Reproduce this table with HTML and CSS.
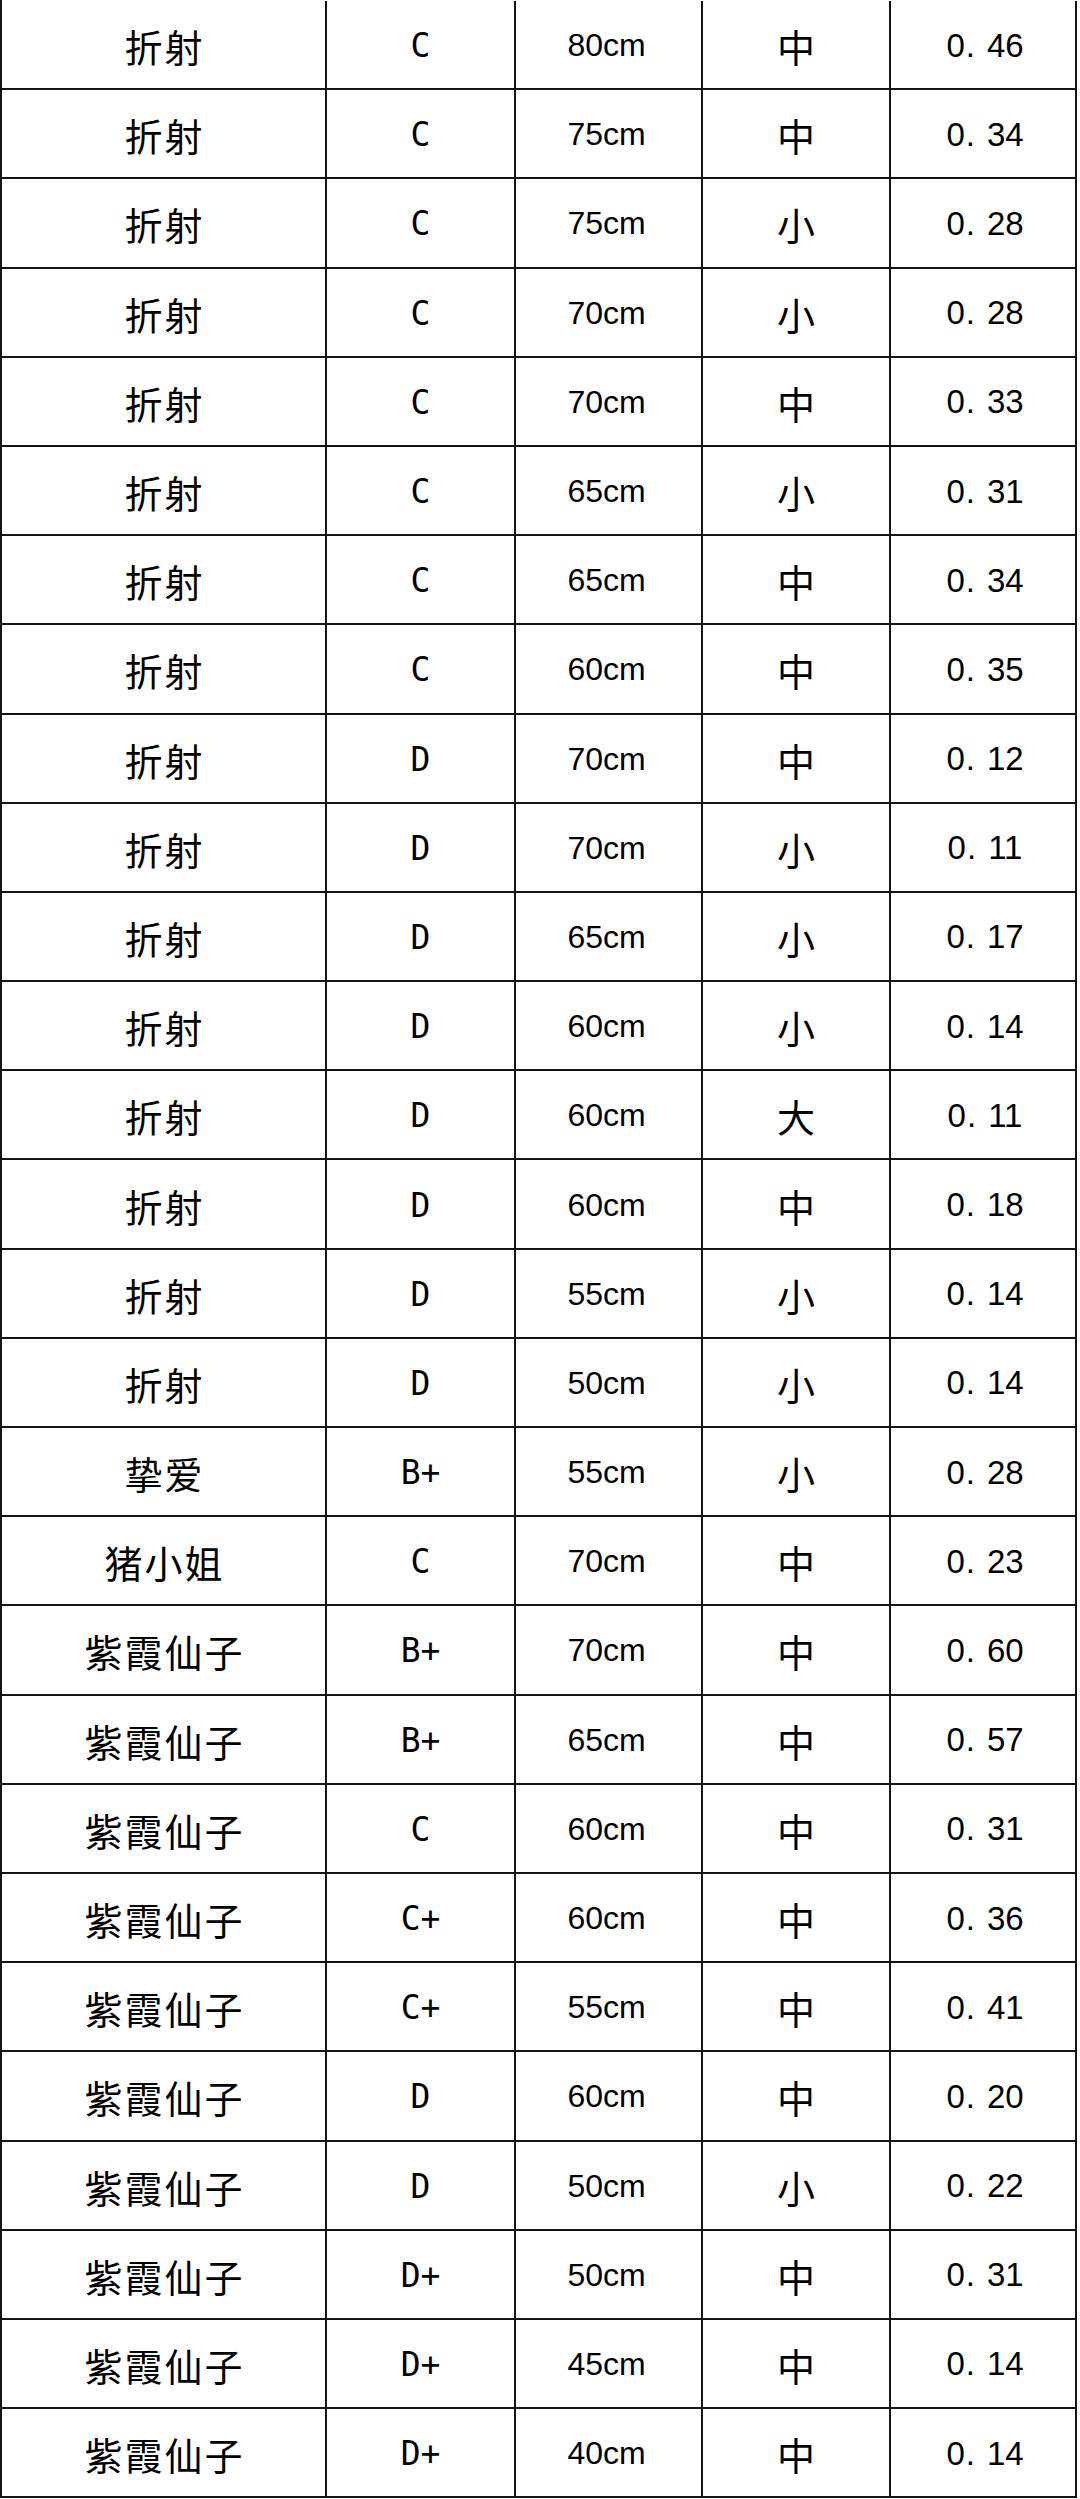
FILE: index.html
```html
<!DOCTYPE html>
<html lang="zh-CN">
<head>
<meta charset="utf-8">
<link rel="stylesheet" href="styles.css">
</head>
<body>
<div class="sheet">
  <div class="row"><div class="c name">折射</div><div class="c cup">C</div><div class="c len">80cm</div><div class="c size">中</div><div class="c val">0<span class="dot">.</span>46</div></div>
  <div class="row"><div class="c name">折射</div><div class="c cup">C</div><div class="c len">75cm</div><div class="c size">中</div><div class="c val">0<span class="dot">.</span>34</div></div>
  <div class="row"><div class="c name">折射</div><div class="c cup">C</div><div class="c len">75cm</div><div class="c size">小</div><div class="c val">0<span class="dot">.</span>28</div></div>
  <div class="row"><div class="c name">折射</div><div class="c cup">C</div><div class="c len">70cm</div><div class="c size">小</div><div class="c val">0<span class="dot">.</span>28</div></div>
  <div class="row"><div class="c name">折射</div><div class="c cup">C</div><div class="c len">70cm</div><div class="c size">中</div><div class="c val">0<span class="dot">.</span>33</div></div>
  <div class="row"><div class="c name">折射</div><div class="c cup">C</div><div class="c len">65cm</div><div class="c size">小</div><div class="c val">0<span class="dot">.</span>31</div></div>
  <div class="row"><div class="c name">折射</div><div class="c cup">C</div><div class="c len">65cm</div><div class="c size">中</div><div class="c val">0<span class="dot">.</span>34</div></div>
  <div class="row"><div class="c name">折射</div><div class="c cup">C</div><div class="c len">60cm</div><div class="c size">中</div><div class="c val">0<span class="dot">.</span>35</div></div>
  <div class="row"><div class="c name">折射</div><div class="c cup">D</div><div class="c len">70cm</div><div class="c size">中</div><div class="c val">0<span class="dot">.</span>12</div></div>
  <div class="row"><div class="c name">折射</div><div class="c cup">D</div><div class="c len">70cm</div><div class="c size">小</div><div class="c val">0<span class="dot">.</span>11</div></div>
  <div class="row"><div class="c name">折射</div><div class="c cup">D</div><div class="c len">65cm</div><div class="c size">小</div><div class="c val">0<span class="dot">.</span>17</div></div>
  <div class="row"><div class="c name">折射</div><div class="c cup">D</div><div class="c len">60cm</div><div class="c size">小</div><div class="c val">0<span class="dot">.</span>14</div></div>
  <div class="row"><div class="c name">折射</div><div class="c cup">D</div><div class="c len">60cm</div><div class="c size">大</div><div class="c val">0<span class="dot">.</span>11</div></div>
  <div class="row"><div class="c name">折射</div><div class="c cup">D</div><div class="c len">60cm</div><div class="c size">中</div><div class="c val">0<span class="dot">.</span>18</div></div>
  <div class="row"><div class="c name">折射</div><div class="c cup">D</div><div class="c len">55cm</div><div class="c size">小</div><div class="c val">0<span class="dot">.</span>14</div></div>
  <div class="row"><div class="c name">折射</div><div class="c cup">D</div><div class="c len">50cm</div><div class="c size">小</div><div class="c val">0<span class="dot">.</span>14</div></div>
  <div class="row"><div class="c name">挚爱</div><div class="c cup">B+</div><div class="c len">55cm</div><div class="c size">小</div><div class="c val">0<span class="dot">.</span>28</div></div>
  <div class="row"><div class="c name">猪小姐</div><div class="c cup">C</div><div class="c len">70cm</div><div class="c size">中</div><div class="c val">0<span class="dot">.</span>23</div></div>
  <div class="row"><div class="c name">紫霞仙子</div><div class="c cup">B+</div><div class="c len">70cm</div><div class="c size">中</div><div class="c val">0<span class="dot">.</span>60</div></div>
  <div class="row"><div class="c name">紫霞仙子</div><div class="c cup">B+</div><div class="c len">65cm</div><div class="c size">中</div><div class="c val">0<span class="dot">.</span>57</div></div>
  <div class="row"><div class="c name">紫霞仙子</div><div class="c cup">C</div><div class="c len">60cm</div><div class="c size">中</div><div class="c val">0<span class="dot">.</span>31</div></div>
  <div class="row"><div class="c name">紫霞仙子</div><div class="c cup">C+</div><div class="c len">60cm</div><div class="c size">中</div><div class="c val">0<span class="dot">.</span>36</div></div>
  <div class="row"><div class="c name">紫霞仙子</div><div class="c cup">C+</div><div class="c len">55cm</div><div class="c size">中</div><div class="c val">0<span class="dot">.</span>41</div></div>
  <div class="row"><div class="c name">紫霞仙子</div><div class="c cup">D</div><div class="c len">60cm</div><div class="c size">中</div><div class="c val">0<span class="dot">.</span>20</div></div>
  <div class="row"><div class="c name">紫霞仙子</div><div class="c cup">D</div><div class="c len">50cm</div><div class="c size">小</div><div class="c val">0<span class="dot">.</span>22</div></div>
  <div class="row"><div class="c name">紫霞仙子</div><div class="c cup">D+</div><div class="c len">50cm</div><div class="c size">中</div><div class="c val">0<span class="dot">.</span>31</div></div>
  <div class="row"><div class="c name">紫霞仙子</div><div class="c cup">D+</div><div class="c len">45cm</div><div class="c size">中</div><div class="c val">0<span class="dot">.</span>14</div></div>
  <div class="row"><div class="c name">紫霞仙子</div><div class="c cup">D+</div><div class="c len">40cm</div><div class="c size">中</div><div class="c val">0<span class="dot">.</span>14</div></div>
</div>
</body>
</html>
```
FILE: styles.css
```css
html, body {
  margin: 0;
  padding: 0;
  background: #ffffff;
}

.sheet {
  width: 1077px;
  padding-top: 1px;
  border-left: 2px solid #141414;
  box-sizing: border-box;
  color: #000000;
}

.row {
  display: grid;
  grid-template-columns: 325px 189px 187px 188px 186px;
  height: 89.2px;
}

.c {
  display: flex;
  align-items: center;
  justify-content: center;
  border-right: 2px solid #141414;
  border-bottom: 2px solid #141414;
  box-sizing: border-box;
  padding-top: 2px;
}

.name, .size {
  font-family: "Noto Sans CJK SC", sans-serif;
  font-size: 38px;
}

.name {
  letter-spacing: 2px;
  padding-left: 2px;
}

.cup {
  font-family: "DejaVu Sans Mono", monospace;
  font-size: 33px;
}

.len {
  font-family: "Liberation Sans", Arial, sans-serif;
  font-size: 32px;
  padding-right: 4px;
}

.val {
  font-family: "Liberation Sans", Arial, sans-serif;
  font-size: 33px;
  padding-left: 4px;
}

.dot {
  margin-right: 12px;
  margin-left: 1px;
}
```
